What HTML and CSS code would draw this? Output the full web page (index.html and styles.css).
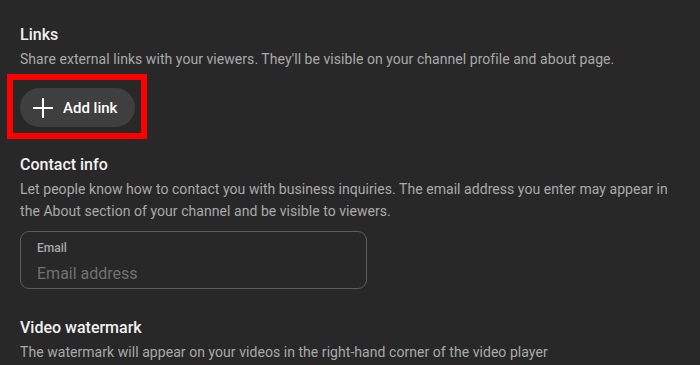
FILE: index.html
```html
<!DOCTYPE html>
<html>
<head>
<meta name="viewport" content="width=device-width, initial-scale=1">
<link rel="stylesheet" href="styles.css">
</head>
<body>

<section class="block links">
  <h2>Links</h2>
  <p class="hint">Share external links with your viewers. They'll be visible on your channel profile and about page.</p>
  <div class="highlight">
    <button class="add-btn" type="button">
      <svg width="20" height="20" viewBox="0 0 20 20"><path d="M10 0v20M0 10h20" stroke="#fff" stroke-width="2" fill="none"/></svg>
      <span>Add link</span>
    </button>
  </div>
</section>

<section class="block contact">
  <h2>Contact info</h2>
  <p class="hint">Let people know how to contact you with business inquiries. The email address you enter may appear in the About section of your channel and be visible to viewers.</p>
  <label class="field">
    <span class="field-label">Email</span>
    <input type="text" placeholder="Email address">
  </label>
</section>

<section class="block watermark">
  <h2>Video watermark</h2>
  <p class="hint">The watermark will appear on your videos in the right-hand corner of the video player</p>
</section>

</body>
</html>
```

FILE: styles.css
```css
body {
  font-family: Roboto, "Liberation Sans", Arial, sans-serif;
  margin: 0;
  padding: 23px 20px 0;
  background-color: #282828;
  color: #f1f1f1;
  overflow: hidden;
}

h2 {
  font-size: 16px;
  font-weight: 500;
  line-height: 24px;
  margin: 0 0 1px;
  color: #f1f1f1;
}

.hint {
  font-size: 14px;
  line-height: 22px;
  letter-spacing: 0.05px;
  margin: 0;
  color: #aaaaaa;
  max-width: 660px;
}

.highlight {
  position: relative;
  display: inline-block;
  margin-top: 18px;
}

.highlight::after {
  content: "";
  position: absolute;
  left: -13px;
  right: -12px;
  top: -14px;
  bottom: -12px;
  border: 6px solid #ff0000;
}

.add-btn {
  display: flex;
  align-items: center;
  gap: 10px;
  height: 39px;
  padding: 0 18px 0 13px;
  border: none;
  border-radius: 20px;
  background-color: #3f3f3f;
  color: #fff;
  font-family: inherit;
  font-size: 15px;
  font-weight: 500;
  cursor: pointer;
}

.contact {
  margin-top: 26px;
}

.field {
  display: block;
  width: 313px;
  margin-top: 9px;
  padding: 8px 16px 3px;
  border: 1px solid #5c5c5c;
  border-radius: 9px;
}

.field-label {
  display: block;
  font-size: 12px;
  font-weight: 500;
  line-height: 16px;
  color: #aaaaaa;
}

.field input {
  display: block;
  width: 100%;
  height: 24px;
  margin-top: 5px;
  padding: 0;
  border: none;
  outline: none;
  background: transparent;
  color: #f1f1f1;
  font-family: inherit;
  font-size: 16px;
}

.field input::placeholder {
  color: #717171;
}

.watermark {
  margin-top: 27px;
}
```
